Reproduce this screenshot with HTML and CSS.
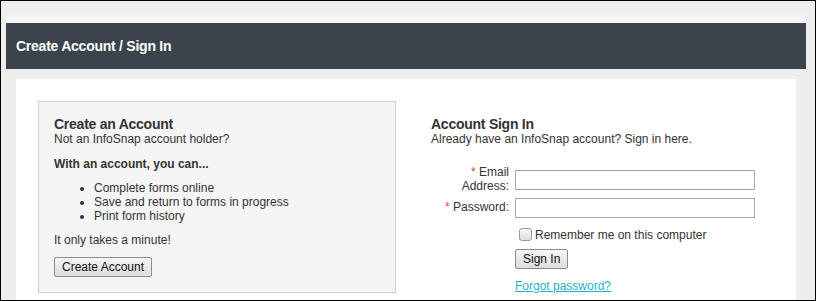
FILE: index.html
```html
<!DOCTYPE html>
<html lang="en">
<head>
<meta charset="utf-8">
<title>Create Account / Sign In</title>
<link rel="stylesheet" href="styles.css">
</head>
<body>
<div class="wrap">
  <div class="strip"></div>
  <div class="header">Create Account / Sign In</div>
  <div class="panel">
    <div class="create-box">
      <h2 class="heading">Create an Account</h2>
      <p class="line">Not an InfoSnap account holder?</p>
      <p class="line bold lead">With an account, you can...</p>
      <ul class="benefits">
        <li>Complete forms online</li>
        <li>Save and return to forms in progress</li>
        <li>Print form history</li>
      </ul>
      <p class="line minute">It only takes a minute!</p>
      <button class="btn create-btn" type="button">Create Account</button>
    </div>
    <div class="signin">
      <h2 class="heading">Account Sign In</h2>
      <p class="line">Already have an InfoSnap account? Sign in here.</p>
      <form class="form">
        <div class="row first">
          <label class="lbl" for="email"><span class="lbl-line"><span class="req">*</span> Email</span><span class="lbl-line">Address:</span></label>
          <input class="field" id="email" type="text">
        </div>
        <div class="row second">
          <label class="lbl" for="pw"><span class="lbl-line"><span class="req">*</span> Password:</span></label>
          <input class="field" id="pw" type="password">
        </div>
        <label class="remember"><input class="check" type="checkbox">Remember me on this computer</label>
        <div class="indent"><button class="btn signin-btn" type="button">Sign In</button></div>
        <div class="indent forgot-row"><a class="forgot" href="#">Forgot password?</a></div>
      </form>
    </div>
  </div>
</div>
</body>
</html>
```

FILE: styles.css
```css
html, body {
  margin: 0;
  padding: 0;
}
body {
  width: 816px;
  height: 301px;
  box-sizing: border-box;
  border: 1px solid #000;
  background: #eeeeee;
  overflow: hidden;
  font-family: "Liberation Sans", Arial, sans-serif;
  font-size: 12px;
  color: #333;
}
.wrap {
  width: 800px;
  margin: 14px 0 0 5px;
}
.strip {
  height: 8px;
  background: #f4f4f4;
}
.header {
  height: 46px;
  line-height: 46px;
  background: #3b444c;
  color: #fff;
  font-weight: bold;
  font-size: 14px;
  letter-spacing: -0.25px;
  padding-left: 10px;
}
.panel {
  margin: 10px 10px 0;
  background: #fff;
  height: 221px;
  overflow: hidden;
  padding: 22px 0 0 22px;
  box-sizing: border-box;
  display: grid;
  grid-template-columns: 358px 1fr;
  column-gap: 35px;
  align-items: start;
}
.create-box {
  border: 1px solid #c9d0dd;
  background: #f5f5f5;
  padding: 15px;
}
.heading {
  margin: 0;
  font-size: 14px;
  line-height: 15px;
  font-weight: bold;
  letter-spacing: -0.25px;
  color: #333;
}
.line {
  margin: 0;
  line-height: 14px;
}
.bold {
  font-weight: bold;
}
.lead {
  margin-top: 11px;
}
.benefits {
  margin: 10px 0 0;
  padding-left: 40px;
  line-height: 14px;
}
.minute {
  margin-top: 10px;
}
.btn {
  display: block;
  height: 20px;
  padding: 0 7px;
  border: 1px solid #8c8c8c;
  border-radius: 2px;
  background: linear-gradient(#f6f6f6, #dddddd);
  font-family: "Liberation Sans", Arial, sans-serif;
  font-size: 12px;
  color: #111;
  line-height: 18px;
}
.create-btn {
  margin-top: 10px;
}
.signin {
  margin-top: 16px;
}
.form {
  margin: 20px 0 0;
}
.row {
  display: flex;
  align-items: center;
  gap: 6px;
}
.row.second {
  margin-top: 5px;
}
.lbl {
  width: 78px;
  text-align: right;
  line-height: 13.5px;
  color: #333;
}
.lbl-line {
  display: block;
}
.req {
  color: #e23d5c;
}
.field {
  width: 240px;
  height: 20px;
  box-sizing: border-box;
  border: 1px solid #a6a6a6;
  margin: 0;
  padding: 1px 3px;
  font-family: "Liberation Sans", Arial, sans-serif;
  font-size: 12px;
}
.remember {
  display: flex;
  align-items: center;
  margin-top: 7px;
  padding-left: 84px;
  line-height: 14px;
  color: #333;
}
.check {
  appearance: none;
  -webkit-appearance: none;
  width: 13px;
  height: 13px;
  margin: 3px 3px 3px 4px;
  border: 1px solid #9a9a9a;
  border-radius: 3px;
  background: linear-gradient(#fafafa, #dcdcdc);
  box-sizing: border-box;
}
.indent {
  padding-left: 84px;
}
.signin-btn {
  margin-top: 5px;
}
.forgot-row {
  margin-top: 10px;
  line-height: 14px;
}
.forgot {
  color: #1fb1c8;
  text-decoration: underline;
}
```
